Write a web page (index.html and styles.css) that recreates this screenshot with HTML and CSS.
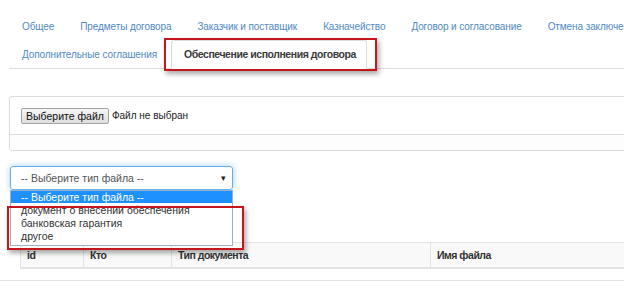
FILE: index.html
```html
<!DOCTYPE html>
<html lang="ru">
<head>
  <meta charset="UTF-8">
  <title>Обеспечение исполнения договора</title>
  <link rel="stylesheet" href="styles.css">
</head>
<body>
  <div class="page">
    <ul class="nav-tabs">
      <li><a href="#">Общее</a></li>
      <li><a href="#">Предметы договора</a></li>
      <li><a href="#">Заказчик и поставщик</a></li>
      <li><a href="#">Казначейство</a></li>
      <li><a href="#">Договор и согласование</a></li>
      <li><a href="#">Отмена заключения договора</a></li>
      <li><a href="#">Дополнительные соглашения</a></li>
      <li class="active"><a href="#">Обеспечение исполнения договора</a></li>
    </ul>

    <div class="panel">
      <div class="panel-body">
        <button class="file-btn">Выберите файл</button>
        <span class="file-name">Файл не выбран</span>
      </div>
      <div class="panel-footer"></div>
    </div>

    <div class="select-wrap">
      <div class="select">
        <span>-- Выберите тип файла --</span>
        <span class="caret">&#9662;</span>
      </div>
      <ul class="options">
        <li class="selected">-- Выберите тип файла --</li>
        <li>документ о внесении обеспечения</li>
        <li>банковская гарантия</li>
        <li>другое</li>
      </ul>
    </div>

    <table class="files">
      <thead>
        <tr>
          <th class="col-id">id</th>
          <th class="col-who">Кто</th>
          <th class="col-type">Тип документа</th>
          <th>Имя файла</th>
        </tr>
      </thead>
    </table>
    <div class="bottom-line"></div>
  </div>

  <!-- annotation frames -->
  <div class="mark mark-tab"></div>
  <div class="mark mark-options"></div>
</body>
</html>
```

FILE: styles.css
```css
body {
  margin: 0;
  font-family: 'Liberation Sans', Arial, sans-serif;
  font-size: 10.5px;
  color: #333;
  background: #fff;
  overflow: hidden;
}
.page {
  width: 780px;
  padding: 12px 0 0 9px;
}
.nav-tabs {
  list-style: none;
  margin: 0;
  padding: 0 0 0 1px;
  display: flex;
  flex-wrap: wrap;
  border-bottom: 1px solid #ddd;
  font-size: 10px;
  letter-spacing: -0.1px;
}
.nav-tabs li {
  margin-right: 2px;
  margin-bottom: -1px;
}
.nav-tabs a {
  display: block;
  padding: 0 11px;
  line-height: 27px;
  color: #5089c6;
  text-decoration: none;
  border: 1px solid transparent;
  border-radius: 3px 3px 0 0;
}
.nav-tabs .active a {
  padding: 0 10px 0 12px;
  color: #3a3a3a;
  font-size: 10.5px;
  font-weight: bold;
  letter-spacing: -0.45px;
  border-color: #ddd #ddd transparent;
  background: #fff;
}
.panel {
  margin-top: 27px;
  border: 1px solid #ddd;
  border-radius: 3px;
}
.panel-body {
  height: 37px;
  padding: 0 11px;
  display: flex;
  align-items: center;
  gap: 3px;
  border-bottom: 1px solid #ddd;
}
.panel-footer {
  height: 15px;
  background: #fdfdfd;
}
.file-btn {
  font-family: inherit;
  font-size: 10.5px;
  color: #111;
  padding: 0 4px;
  height: 16px;
  border: 1px solid #a3a3a3;
  border-radius: 2px;
  background: linear-gradient(#f6f6f6, #dedede);
}
.file-name {
  font-size: 10px;
  color: #222;
}
.select-wrap {
  position: relative;
  width: 223px;
  margin-top: 15px;
  margin-left: 1px;
}
.select {
  height: 22px;
  padding: 0 6px 0 10px;
  display: flex;
  align-items: center;
  justify-content: space-between;
  border: 1px solid #66afe9;
  border-radius: 3px;
  box-shadow: 0 0 6px rgba(102, 175, 233, 0.6);
  color: #555;
}
.caret {
  font-size: 9px;
  color: #222;
}
.options {
  position: absolute;
  left: 0;
  top: 24px;
  width: 221px;
  margin: 0;
  padding: 0 0 2px;
  list-style: none;
  border: 1px solid #9fb0c6;
  background: #fff;
  z-index: 2;
}
.options li {
  padding: 0 10px;
  line-height: 13px;
  color: #333;
}
.options .selected {
  background: #1e90ff;
  color: #fff;
  line-height: 12px;
  margin-bottom: 1px;
}
.files {
  margin: 52px 0 0 11px;
  width: 760px;
  border-collapse: collapse;
  background: #f9f9f9;
}
.files th {
  text-align: left;
  height: 24px;
  padding: 0 6px;
  border: 1px solid #e3e3e3;
  border-bottom-width: 2px;
  font-weight: bold;
  letter-spacing: -0.5px;
  color: #333;
}
.col-id {
  width: 50px;
}
.col-who {
  width: 75px;
}
.col-type {
  width: 246px;
}
.bottom-line {
  margin: 11px 0 0 -9px;
  border-top: 1px solid #e3e3e3;
}
.mark {
  position: absolute;
  border: 2px solid #c4161c;
  box-shadow: 2px 3px 5px rgba(0, 0, 0, 0.35);
  z-index: 5;
}
.mark-tab {
  left: 164px;
  top: 38px;
  width: 209px;
  height: 29px;
}
.mark-options {
  left: 7px;
  top: 206px;
  width: 233px;
  height: 40px;
}
```
